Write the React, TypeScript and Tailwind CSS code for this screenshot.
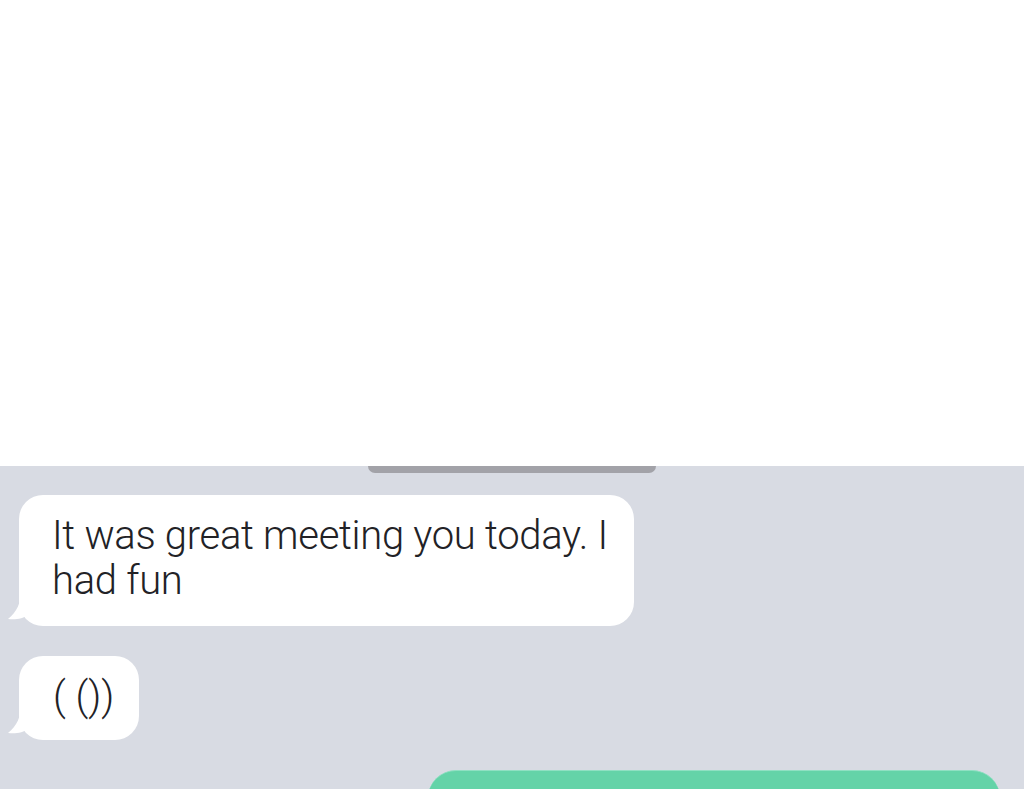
import React from 'react';

function Tail() {
  return (
    <svg
      className="absolute left-[-12px] bottom-[4px]"
      width="30"
      height="30"
      viewBox="0 0 30 30"
    >
      <path d="M14 0 C14 10 10 20 1 27 C8 28 16 27 22 22 L30 22 L30 0 Z" fill="#ffffff" />
    </svg>
  );
}

function Bubble({ children, className }: { children: React.ReactNode; className: string }) {
  return (
    <div className={`relative bg-white rounded-[24px] ${className}`}>
      <Tail />
      <div className="relative">{children}</div>
    </div>
  );
}

export default function App() {
  return (
    <div className="w-[1024px] h-[789px] overflow-hidden flex flex-col bg-white font-['Roboto',sans-serif]">
      <div className="h-[466px] shrink-0 bg-white" />
      <div className="flex-1 bg-[#d8dbe3] flex flex-col">
        <div className="ml-[368px] w-[288px] h-[7px] bg-[#a2a2a8] rounded-b-[10px]" />
        <div className="mt-[22px] pl-[19px] flex flex-col gap-[30px]">
          <Bubble className="w-[615px] h-[131px] pl-[33px] pr-[20px] pt-[18px]">
            <p className="text-[40px] leading-[45px] font-light text-[#222226] tracking-[-0.3px]">
              It was great meeting you today. I had fun
            </p>
          </Bubble>
          <Bubble className="w-[120px] h-[84px] pl-[34px] pt-[18px]">
            <p className="text-[40px] leading-[45px] font-light text-[#222226]">( ())</p>
          </Bubble>
        </div>
        <div className="mt-[30px] ml-[428px] w-[572px] h-[40px] bg-[#64d3a8] border-t border-[#8fe0c2] rounded-t-[28px]" />
      </div>
    </div>
  );
}
